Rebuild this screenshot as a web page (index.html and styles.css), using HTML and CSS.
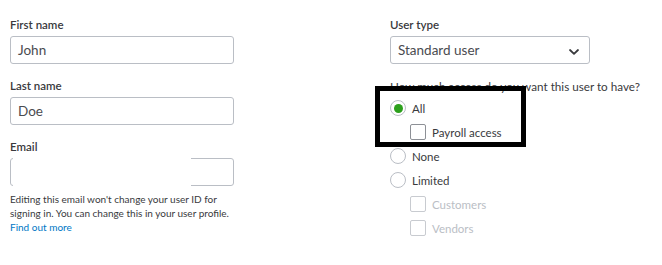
FILE: index.html
```html
<!DOCTYPE html>
<html lang="en">
<head>
  <meta charset="UTF-8" />
  <meta name="viewport" content="width=device-width, initial-scale=1.0" />
  <title>User details</title>
  <link rel="stylesheet" href="styles.css">
</head>

<body>
  <div class="form">

    <!-- LEFT COLUMN -->
    <div class="col col-left">
      <div class="field">
        <label class="label">First name</label>
        <div class="input">John</div>
      </div>
      <div class="field">
        <label class="label">Last name</label>
        <div class="input">Doe</div>
      </div>
      <div class="field">
        <label class="label">Email</label>
        <div class="input email"><span class="redact"></span></div>
        <p class="help">Editing this email won't change your user ID for signing in. You can change this in your user profile.</p>
        <a href="#" class="link">Find out more</a>
      </div>
    </div>

    <!-- RIGHT COLUMN -->
    <div class="col col-right">
      <div class="field">
        <label class="label">User type</label>
        <div class="input select">
          Standard user
          <svg class="chevron" width="12" height="8" viewBox="0 0 12 8"><path d="M2 2 L6 5.8 L10 2" fill="none" stroke="#393a3d" stroke-width="1.8" stroke-linecap="round" stroke-linejoin="round"/></svg>
        </div>
      </div>

      <div class="access">
        <p class="question">How much access do you want this user to have?</p>
        <div class="option"><span class="radio checked"></span>All</div>
        <div class="option sub"><span class="check"></span>Payroll access</div>
        <div class="option"><span class="radio"></span>None</div>
        <div class="option"><span class="radio"></span>Limited</div>
        <div class="option sub disabled"><span class="check"></span>Customers</div>
        <div class="option sub disabled"><span class="check"></span>Vendors</div>
        <div class="highlight"></div>
      </div>
    </div>

  </div>
</body>
</html>
```

FILE: styles.css
```css
body {
  margin: 0;
  font-family: Lato, "Noto Sans", sans-serif;
  color: #393a3d;
  background: #fff;
}

.form {
  display: flex;
  padding: 18px 10px 0;
}

.col-left {
  width: 224px;
}

.col-right {
  margin-left: 156px;
  width: 262px;
}

/* FIELDS */
.field {
  margin-bottom: 15px;
}

.label {
  display: block;
  font-size: 11.5px;
  font-weight: 600;
  line-height: 14px;
  margin-bottom: 4px;
}

.input {
  position: relative;
  box-sizing: border-box;
  height: 28px;
  border: 1px solid #babec5;
  border-radius: 3px;
  padding: 0 7px;
  font-size: 13.5px;
  line-height: 26px;
  color: #4a4b4f;
}

.col-right .input {
  width: 200px;
}

.redact {
  position: absolute;
  left: 2px;
  top: -1px;
  bottom: -1px;
  width: 178px;
  background: #fff;
}

.chevron {
  position: absolute;
  right: 9px;
  top: 11px;
}

.help {
  margin: 6px 0 0;
  font-size: 10px;
  line-height: 14px;
}

.link {
  display: block;
  font-size: 10px;
  line-height: 14px;
  color: #0077c5;
  text-decoration: none;
}

/* ACCESS OPTIONS */
.access {
  position: relative;
  margin-top: 2px;
}

.question {
  margin: 0 0 3px;
  font-size: 11.7px;
  line-height: 14px;
}

.option {
  display: flex;
  align-items: center;
  height: 24px;
  font-size: 11.5px;
}

.option.sub {
  padding-left: 20px;
}

.option.disabled {
  color: #babec5;
}

.radio {
  box-sizing: border-box;
  width: 16px;
  height: 16px;
  border: 1px solid #babec5;
  border-radius: 50%;
  margin-right: 6px;
  display: flex;
  align-items: center;
  justify-content: center;
}

.radio.checked::after {
  content: "";
  width: 9px;
  height: 9px;
  border-radius: 50%;
  background: #2ca01c;
}

.check {
  box-sizing: border-box;
  width: 16px;
  height: 16px;
  border: 1px solid #8d9096;
  border-radius: 2px;
  margin-right: 6px;
}

.option.disabled .check {
  border-color: #c8cbd0;
}

.highlight {
  position: absolute;
  left: -15px;
  top: 7px;
  width: 141px;
  height: 51px;
  border: 5px solid #000;
}
```
